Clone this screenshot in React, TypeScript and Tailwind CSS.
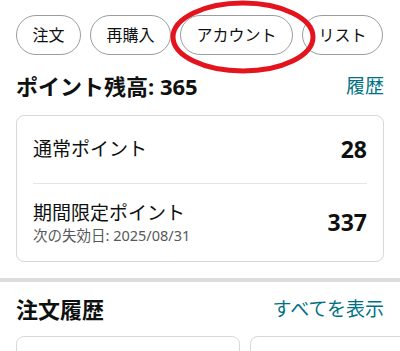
import React from 'react';

const FONT = '"Noto Sans", "Noto Sans CJK JP", sans-serif';
const TABS = ['注文', '再購入', 'アカウント', 'リスト'];

function Pill({ label }: { label: string }) {
  return (
    <div className="flex h-10 shrink-0 items-center rounded-full border border-[#9a9d9d] px-[15.5px] text-[16px] text-[#0f1111]">
      {label}
    </div>
  );
}

export default function App() {
  return (
    <div className="relative w-full overflow-hidden bg-white text-[#0f1111]" style={{ fontFamily: FONT }}>
      <div className="px-4 pb-4">
        <div className="relative">
          <div className="flex gap-[9px] pt-[15px]">
            {TABS.map((t) => (
              <Pill key={t} label={t} />
            ))}
          </div>
          {/* red circle annotation */}
          <svg
            className="pointer-events-none absolute left-[154px] top-0"
            width="146"
            height="74"
            viewBox="0 0 146 74"
          >
            <ellipse cx="73" cy="37" rx="70" ry="34" fill="none" stroke="#e4141e" strokeWidth="5" />
          </svg>
        </div>

        <div className="mt-4 flex items-center justify-between">
          <h2 className="text-[22px] font-bold leading-[30px]">ポイント残高: 365</h2>
          <a className="text-[19px] text-[#007185]">履歴</a>
        </div>

        <div className="mt-[14px] rounded-lg border border-[#d5d9d9]">
          <div className="mx-4 flex h-[68px] items-center justify-between border-b border-[#e3e6e6]">
            <span className="text-[19px]">通常ポイント</span>
            <span className="text-[23px] font-bold">28</span>
          </div>
          <div className="mx-4 flex h-[77px] items-center justify-between">
            <div className="flex flex-col">
              <span className="text-[19px] leading-6">期間限定ポイント</span>
              <span className="text-[14.5px] leading-5 text-[#565959]">次の失効日: 2025/08/31</span>
            </div>
            <span className="text-[23px] font-bold">337</span>
          </div>
        </div>
      </div>

      <div className="h-1 bg-[#dcdddd]" />

      <div className="px-4 pt-3">
        <div className="flex items-center justify-between">
          <h2 className="text-[22px] font-bold leading-[30px]">注文履歴</h2>
          <a className="text-[19px] text-[#007185]">すべてを表示</a>
        </div>
        <div className="mt-3 flex gap-[10px]">
          <div className="h-[120px] w-[224px] shrink-0 rounded-lg border border-[#d5d9d9]" />
          <div className="h-[120px] w-[224px] shrink-0 rounded-lg border border-[#d5d9d9]" />
        </div>
      </div>
    </div>
  );
}
